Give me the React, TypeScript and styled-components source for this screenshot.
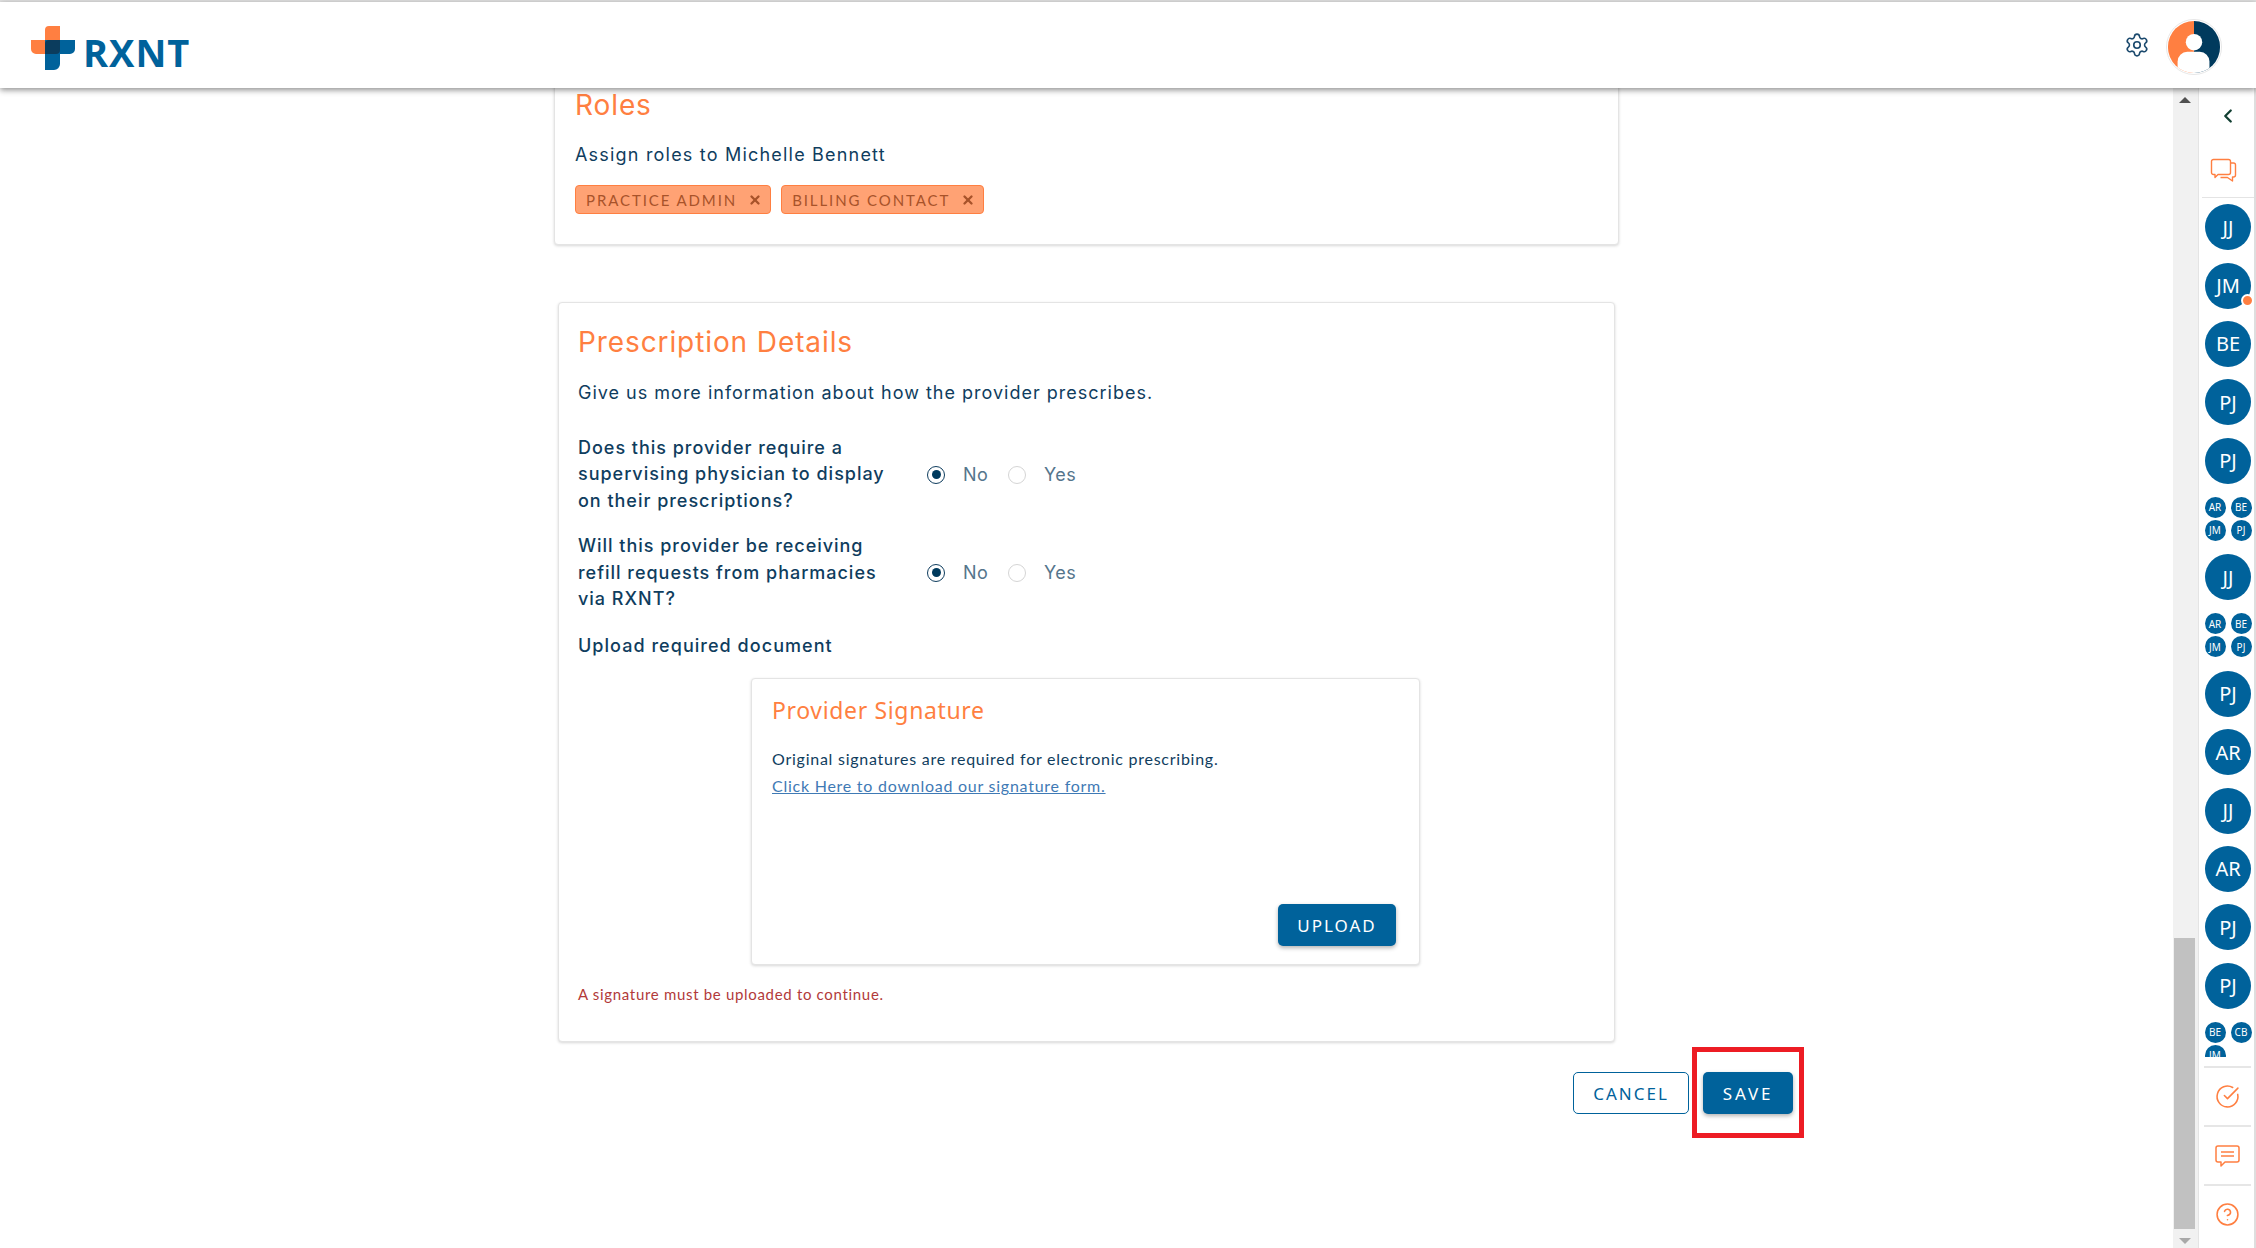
import React from "react";
import styled, { createGlobalStyle } from "styled-components";
import { Settings, ChevronLeft, CircleCheckBig, CircleHelp, X } from "lucide-react";

const ORANGE = "#ff7f41";
const BLUE = "#00629b";
const NAVY = "#0f3d5e";

const GlobalStyle = createGlobalStyle`
  html, body {
    margin: 0;
    padding: 0;
    height: 100%;
    background: #fff;
    overflow: hidden;
    font-family: "Inter", "Noto Sans", sans-serif;
  }
  #root {
    height: 100%;
  }
  * {
    box-sizing: border-box;
  }
`;

const Page = styled.div`
  height: 1248px;
  display: flex;
  flex-direction: column;
  border-top: 2px solid #e2e2e2;
`;

const Header = styled.header`
  height: 86px;
  flex: none;
  background: #fff;
  display: flex;
  align-items: center;
  justify-content: space-between;
  padding: 0 34px 0 31px;
  box-shadow: 0 2px 6px rgba(0, 0, 0, 0.45);
  position: relative;
  z-index: 3;
`;

const Brand = styled.div`
  display: flex;
  align-items: center;
  gap: 7px;
  margin-top: 5px;
`;

const BrandName = styled.span`
  font-family: "Open Sans", sans-serif;
  font-weight: 700;
  font-size: 38px;
  line-height: 43px;
  margin-top: 10px;
  color: ${BLUE};
  letter-spacing: 1px;
`;

const HeaderTools = styled.div`
  display: flex;
  align-items: center;
  gap: 16px;
  color: #1c4a6e;
`;

const UserBadge = styled.svg`
  display: block;
  margin-top: 4px;
`;

const Body = styled.div`
  flex: 1;
  display: flex;
  min-height: 0;
`;

const Main = styled.main`
  flex: 1;
  min-width: 0;
  overflow: hidden;
  display: flex;
  flex-direction: column;
  align-items: center;
`;

const Card = styled.section<{ $w: number }>`
  width: ${(p) => p.$w}px;
  flex: none;
  background: #fff;
  border: 1px solid #e4e4e4;
  border-radius: 4px;
  box-shadow: 0 1px 3px rgba(0, 0, 0, 0.16);
`;

const RolesCard = styled(Card)`
  margin-top: -21px;
  height: 178px;
  padding: 18px 20px 0;
`;

const DetailsCard = styled(Card)`
  margin-top: 57px;
  height: 740px;
  padding: 20px 19px 0;
`;

const Title = styled.h2`
  margin: 0;
  font-weight: 400;
  font-size: 28px;
  line-height: 38px;
  color: ${ORANGE};
  letter-spacing: 0.9px;
`;

const Lead = styled.p<{ $gap: number; $track: number }>`
  margin: ${(p) => p.$gap}px 0 0;
  font-size: 18px;
  line-height: 26px;
  color: ${NAVY};
  letter-spacing: ${(p) => p.$track}px;
`;

const Tags = styled.div`
  display: flex;
  gap: 10px;
  margin-top: 17px;
`;

const Tag = styled.span`
  height: 29px;
  display: inline-flex;
  align-items: center;
  gap: 11px;
  padding: 0 8px 0 10px;
  background: #ffa274;
  border: 1px solid ${ORANGE};
  border-radius: 4px;
  font-family: "Lato", sans-serif;
  font-size: 15px;
  letter-spacing: 1.9px;
  color: #a8532a;
`;

const Question = styled.div<{ $gap: number }>`
  display: flex;
  align-items: center;
  color: ${NAVY};
  margin-top: ${(p) => p.$gap}px;
`;

const QuestionText = styled.div`
  width: 349px;
  font-size: 18px;
  font-weight: 500;
  line-height: 26.4px;
  letter-spacing: 0.98px;
`;

const RadioGroup = styled.div`
  display: flex;
  align-items: center;
`;

const Radio = styled.span<{ $on?: boolean }>`
  width: 18px;
  height: 18px;
  border-radius: 50%;
  border: 1px solid ${(p) => (p.$on ? NAVY : "#d5d5d5")};
  display: flex;
  align-items: center;
  justify-content: center;
  &::after {
    content: "";
    width: 9px;
    height: 9px;
    border-radius: 50%;
    background: ${(p) => (p.$on ? "#003a5d" : "transparent")};
  }
`;

const RadioLabel = styled.span`
  width: 63px;
  padding-left: 18px;
  font-size: 18px;
  color: #55758c;
  letter-spacing: 0.4px;
`;

const UploadLabel = styled.div`
  margin-top: 21px;
  font-size: 18px;
  font-weight: 500;
  line-height: 26px;
  letter-spacing: 1.04px;
  color: ${NAVY};
`;

const SignatureCard = styled(Card)`
  height: 287px;
  margin: 19px 0 0 173px;
  padding: 16px 20px 0;
  display: flex;
  flex-direction: column;
`;

const SignatureTitle = styled.h3`
  margin: 0;
  font-family: "Noto Sans", sans-serif;
  font-weight: 400;
  font-size: 23px;
  line-height: 30px;
  letter-spacing: 0.65px;
  color: ${ORANGE};
`;

const SmallText = styled.p`
  margin: 24px 0 0;
  font-family: "Lato", sans-serif;
  font-size: 16px;
  line-height: 20px;
  letter-spacing: 0.75px;
  color: ${NAVY};
`;

const SmallLink = styled.a`
  display: block;
  margin-top: 7px;
  font-family: "Lato", sans-serif;
  font-size: 16px;
  line-height: 20px;
  letter-spacing: 0.75px;
  color: #3f7ab5;
  text-decoration: underline;
`;

const Button = styled.button<{ $track: number }>`
  height: 42px;
  border-radius: 5px;
  font-family: "Noto Sans", sans-serif;
  font-size: 17px;
  letter-spacing: ${(p) => p.$track}px;
  padding: 0;
  cursor: pointer;
`;

const PrimaryButton = styled(Button)<{ $w: number }>`
  width: ${(p) => p.$w}px;
  background: ${BLUE};
  color: #fff;
  border: 0;
  box-shadow: 0 2px 4px rgba(0, 0, 0, 0.3);
`;

const OutlineButton = styled(Button)`
  width: 116px;
  background: #fff;
  color: ${BLUE};
  border: 1px solid ${BLUE};
`;

const UploadRow = styled.div`
  margin-top: auto;
  padding-bottom: 18px;
  display: flex;
  justify-content: flex-end;
  padding-right: 3px;
`;

const ErrorText = styled.p`
  margin: 19px 0 0;
  font-family: "Lato", sans-serif;
  font-size: 15px;
  line-height: 20px;
  letter-spacing: 0.68px;
  color: #b23a3a;
`;

const Actions = styled.div`
  flex: none;
  align-self: flex-end;
  margin: 30px 380px 0 0;
  display: flex;
  gap: 14px;
`;

const Highlighted = styled.div`
  position: relative;
  display: flex;
  &::after {
    content: "";
    position: absolute;
    inset: -25px -11px -24px -11px;
    border: 5px solid #ed1c24;
    pointer-events: none;
  }
`;

const Scrollbar = styled.div`
  width: 26px;
  flex: none;
  background: #f1f1f1;
  border-right: 1px solid #e4e4e4;
  display: flex;
  flex-direction: column;
  align-items: center;
  padding: 9px 2px 4px 0;
`;

const Arrow = styled.span<{ $down?: boolean }>`
  flex: none;
  width: 0;
  height: 0;
  border-left: 6px solid transparent;
  border-right: 6px solid transparent;
  ${(p) =>
    p.$down ? "border-top: 6px solid #a8a8a8;" : "border-bottom: 6px solid #505050;"}
`;

const Thumb = styled.div`
  flex: none;
  width: 21px;
  height: 291px;
  margin-top: auto;
  margin-bottom: 9px;
  background: #c1c1c1;
`;

const Sidebar = styled.aside`
  width: 57px;
  flex: none;
  background: #fff;
  border-right: 2px solid #dedede;
  display: flex;
  flex-direction: column;
  padding-left: 3px;
`;

const SideTop = styled.div`
  height: 110px;
  flex: none;
  display: flex;
  flex-direction: column;
  align-items: center;
  padding-top: 17px;
  gap: 31px;
  color: #123f32;
  border-bottom: 1px solid #e4e4e4;
`;

const ChatIconWrap = styled.div`
  display: flex;
  margin-right: 9px;
`;

const ChatList = styled.div`
  height: 859px;
  flex: none;
  overflow: hidden;
`;

const ChatItem = styled.div`
  height: 58.35px;
  display: flex;
  align-items: center;
  justify-content: center;
`;

const Avatar = styled.div`
  width: 46px;
  height: 46px;
  border-radius: 50%;
  background: ${BLUE};
  color: #fff;
  font-family: "Noto Sans", sans-serif;
  font-size: 20px;
  display: flex;
  align-items: center;
  justify-content: center;
  position: relative;
`;

const Dot = styled.span`
  position: absolute;
  right: -3px;
  bottom: 2px;
  width: 13px;
  height: 13px;
  border-radius: 50%;
  background: ${ORANGE};
  border: 2px solid #fff;
`;

const AvatarGroup = styled.div`
  width: 47px;
  display: grid;
  grid-template-columns: 21px 21px;
  grid-auto-rows: 21px;
  justify-content: space-between;
  row-gap: 2px;
  align-self: flex-start;
  margin-top: 7px;
`;

const MiniAvatar = styled.div`
  width: 21px;
  height: 21px;
  border-radius: 50%;
  background: ${BLUE};
  color: #fff;
  font-family: "Noto Sans", sans-serif;
  font-size: 10px;
  display: flex;
  align-items: center;
  justify-content: center;
`;

const SideFooter = styled.div`
  margin: 9px 3px 0 2px;
  color: ${ORANGE};
`;

const FooterItem = styled.div`
  height: 59px;
  border-top: 2px solid #e6e6e6;
  display: flex;
  align-items: center;
  justify-content: center;
`;

const chats: (string | string[])[] = [
  "JJ",
  "JM",
  "BE",
  "PJ",
  "PJ",
  ["AR", "BE", "JM", "PJ"],
  "JJ",
  ["AR", "BE", "JM", "PJ"],
  "PJ",
  "AR",
  "JJ",
  "AR",
  "PJ",
  "PJ",
  ["BE", "CB", "JM"],
];

const Logo = () => (
  <svg width="45" height="44" viewBox="0 0 45 44">
    <path d="M18 0h11v28H5a5 5 0 0 1-5-5V14h14V4a4 4 0 0 1 4-4z" fill="#ff7f41" />
    <path d="M14 14h30v9a5 5 0 0 1-5 5H29v10a6 6 0 0 1-6 6h-9V14z" fill="#00629b" />
    <path d="M18 14h11v10a4 4 0 0 1-4 4H14V18a4 4 0 0 1 4-4z" fill="#0b3c5d" />
  </svg>
);

const UserAvatar = () => (
  <UserBadge width="56" height="56" viewBox="0 0 58 58">
    <defs>
      <clipPath id="userClip">
        <circle cx="29" cy="29" r="27" />
      </clipPath>
    </defs>
    <circle cx="29" cy="29" r="28.5" fill="#fff" stroke="#e6e6e6" />
    <g clipPath="url(#userClip)">
      <rect x="2" y="2" width="27" height="54" fill="#ff7f41" />
      <rect x="29" y="2" width="27" height="54" fill="#003a5d" />
      <circle cx="29" cy="24" r="8.5" fill="#fff" />
      <rect x="12" y="34" width="33" height="30" rx="10" fill="#fff" />
    </g>
  </UserBadge>
);

const ChatIcon = () => (
  <svg width="28" height="28" viewBox="0 0 28 28" fill="none" stroke="#ff7f41" strokeWidth="1.4" strokeLinejoin="round">
    <path d="M3.5 1.5h15a2 2 0 0 1 2 2v11a2 2 0 0 1-2 2H8l-3 3v-3H3.5a2 2 0 0 1-2-2v-11a2 2 0 0 1 2-2z" />
    <path d="M20.5 5h3a2 2 0 0 1 2 2v10a2 2 0 0 1-2 2h-1v4l-5-3.5h-7" />
  </svg>
);

const CommentIcon = () => (
  <svg width="25" height="24" viewBox="0 0 25 24" fill="none" stroke="#ff7f41" strokeWidth="1.5" strokeLinejoin="round">
    <path d="M3 2h19a2 2 0 0 1 2 2v12a2 2 0 0 1-2 2H10l-4 4v-4H3a2 2 0 0 1-2-2V4a2 2 0 0 1 2-2z" />
    <path d="M6 8h13M6 12h13" />
  </svg>
);

const Answer = () => (
  <RadioGroup>
    <Radio $on />
    <RadioLabel>No</RadioLabel>
    <Radio />
    <RadioLabel>Yes</RadioLabel>
  </RadioGroup>
);

export default function App() {
  return (
    <>
      <GlobalStyle />
      <Page>
        <Header>
          <Brand>
            <Logo />
            <BrandName>RXNT</BrandName>
          </Brand>
          <HeaderTools>
            <Settings size={26} strokeWidth={1.5} />
            <UserAvatar />
          </HeaderTools>
        </Header>
        <Body>
          <Main>
            <RolesCard $w={1065}>
              <Title>Roles</Title>
              <Lead $gap={18} $track={1.2}>Assign roles to Michelle Bennett</Lead>
              <Tags>
                <Tag>
                  PRACTICE ADMIN
                  <X size={14} strokeWidth={4} />
                </Tag>
                <Tag>
                  BILLING CONTACT
                  <X size={14} strokeWidth={4} />
                </Tag>
              </Tags>
            </RolesCard>

            <DetailsCard $w={1057}>
              <Title>Prescription Details</Title>
              <Lead $gap={19} $track={1}>Give us more information about how the provider prescribes.</Lead>
              <Question $gap={29}>
                <QuestionText>
                  Does this provider require a
                  <br />
                  supervising physician to display
                  <br />
                  on their prescriptions?
                </QuestionText>
                <Answer />
              </Question>
              <Question $gap={19}>
                <QuestionText>
                  Will this provider be receiving
                  <br />
                  refill requests from pharmacies
                  <br />
                  via RXNT?
                </QuestionText>
                <Answer />
              </Question>
              <UploadLabel>Upload required document</UploadLabel>
              <SignatureCard $w={669}>
                <SignatureTitle>Provider Signature</SignatureTitle>
                <SmallText>Original signatures are required for electronic prescribing.</SmallText>
                <SmallLink href="#">Click Here to download our signature form.</SmallLink>
                <UploadRow>
                  <PrimaryButton $w={118} $track={2}>UPLOAD</PrimaryButton>
                </UploadRow>
              </SignatureCard>
              <ErrorText>A signature must be uploaded to continue.</ErrorText>
            </DetailsCard>

            <Actions>
              <OutlineButton $track={2}>CANCEL</OutlineButton>
              <Highlighted>
                <PrimaryButton $w={90} $track={2.8}>SAVE</PrimaryButton>
              </Highlighted>
            </Actions>
          </Main>
          <Scrollbar>
            <Arrow />
            <Thumb />
            <Arrow $down />
          </Scrollbar>
          <Sidebar>
            <SideTop>
              <ChevronLeft size={22} strokeWidth={2.5} />
              <ChatIconWrap>
                <ChatIcon />
              </ChatIconWrap>
            </SideTop>
            <ChatList>
              {chats.map((chat, i) => (
                <ChatItem key={i}>
                  {Array.isArray(chat) ? (
                    <AvatarGroup>
                      {chat.map((name) => (
                        <MiniAvatar key={name}>{name}</MiniAvatar>
                      ))}
                    </AvatarGroup>
                  ) : (
                    <Avatar>
                      {chat}
                      {i === 1 && <Dot />}
                    </Avatar>
                  )}
                </ChatItem>
              ))}
            </ChatList>
            <SideFooter>
              <FooterItem>
                <CircleCheckBig size={25} strokeWidth={1.5} />
              </FooterItem>
              <FooterItem>
                <CommentIcon />
              </FooterItem>
              <FooterItem>
                <CircleHelp size={25} strokeWidth={1.5} />
              </FooterItem>
            </SideFooter>
          </Sidebar>
        </Body>
      </Page>
    </>
  );
}
